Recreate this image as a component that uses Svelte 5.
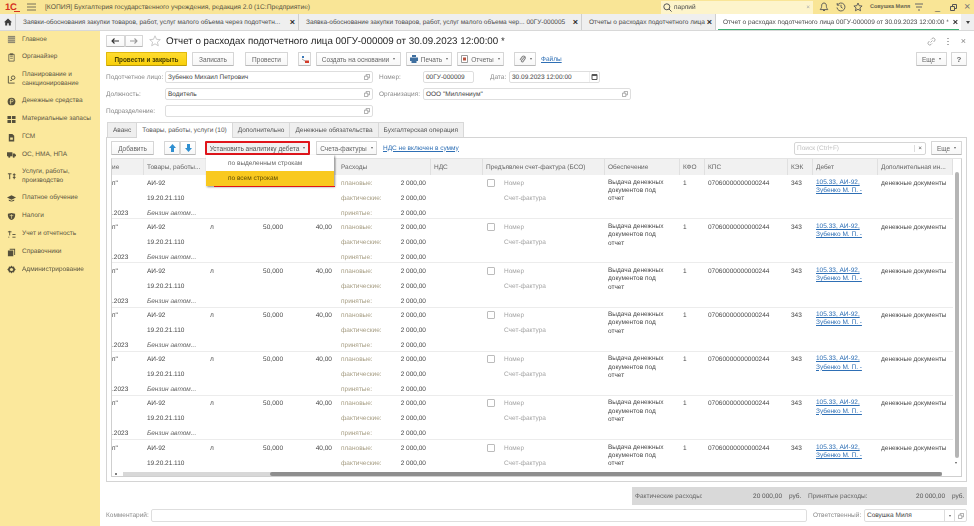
<script>
  const sideItems = [
    { label: ['Главное'], icon: 'home' },
    { label: ['Органайзер'], icon: 'org' },
    { label: ['Планирование и', 'санкционирование'], icon: 'plan' },
    { label: ['Денежные средства'], icon: 'money' },
    { label: ['Материальные запасы'], icon: 'stock' },
    { label: ['ГСМ'], icon: 'fuel' },
    { label: ['ОС, НМА, НПА'], icon: 'truck' },
    { label: ['Услуги, работы,', 'производство'], icon: 'tools' },
    { label: ['Платное обучение'], icon: 'edu' },
    { label: ['Налоги'], icon: 'tax' },
    { label: ['Учет и отчетность'], icon: 'acc' },
    { label: ['Справочники'], icon: 'books' },
    { label: ['Администрирование'], icon: 'gear' }
  ];

  const docTabs = [
    { text: 'Заявки-обоснования закупки товаров, работ, услуг малого объема через подотчетн...', w: 283 },
    { text: 'Заявка-обоснование закупки товаров, работ, услуг малого объема чер...  00ГУ-000005', w: 283 },
    { text: 'Отчеты о расходах подотчетного лица', w: 134 },
    { text: 'Отчет о расходах подотчетного лица 00ГУ-000009 от 30.09.2023 12:00:00 *', w: 246, active: true }
  ];

  const formTabs = ['Аванс', 'Товары, работы, услуги (10)', 'Дополнительно', 'Денежные обязательства', 'Бухгалтерская операция'];

  const headers = ['ие', 'Товары, работы...', '', '', '', 'Расходы', 'НДС', 'Предъявлен счет-фактура (БСО)', 'Обеспечение', 'КФО', 'КПС', 'КЭК', 'Дебет', 'Дополнительная ин...'];
  const rows = [0, 1, 2, 3, 4, 5, 6];
</script>

<div class="app">
  <header class="titlebar">
    <span class="logo">1С<i></i></span>
    <svg class="burger" width="9" height="8" viewBox="0 0 9 8"><path d="M0 1h9M0 4h9M0 7h9" stroke="#77705a" stroke-width="1"/></svg>
    <span class="apptitle">[КОПИЯ] Бухгалтерия государственного учреждения, редакция 2.0 (1С:Предприятие)</span>
    <div class="searchbox">
      <svg width="9" height="9" viewBox="0 0 9 9"><circle cx="3.8" cy="3.8" r="3" fill="none" stroke="#555"/><path d="M6 6l2.6 2.6" stroke="#555"/></svg>
      <span>парлий</span>
      <b>×</b>
    </div>
    <div class="sysicons">
      <svg width="10" height="10" viewBox="0 0 10 10"><path d="M5 1C3 1 2.6 2.6 2.6 4.4 2.6 6 1.5 7 1.2 7.6h7.6C8.500 7 7.400 6 7.400 4.400 7.400 2.600 7 1 5 1zM4 8.500h2" fill="none" stroke="#555" stroke-width=".9"/></svg>
      <svg width="10" height="10" viewBox="0 0 10 10"><path d="M1.500 3A4 4 0 1 1 1 5.500M1.200 1v2.200h2.200M5 2.800V5.200l1.600 1" fill="none" stroke="#555" stroke-width=".9"/></svg>
      <svg width="10" height="10" viewBox="0 0 10 10"><path d="M5 1l1.200 2.700 2.900.3-2.200 1.900.7 2.900L5 7.300 2.400 8.800l.7-2.900L.9 4l2.900-.3z" fill="none" stroke="#555" stroke-width=".9"/></svg>
      <span class="user">Совушка Миля</span>
      <svg width="9" height="9" viewBox="0 0 9 9"><path d="M0 1h8M1 4h6M3 7h2" stroke="#666" stroke-width="1"/></svg>
      <span class="winbtn">_</span>
      <svg class="restore" width="7" height="7" viewBox="0 0 7 7"><path d="M.5 2.500h4v4h-4zM2.500 2.500V.5h4v4h-2" fill="none" stroke="#555"/></svg>
      <span class="winbtn close">×</span>
    </div>
  </header>

  <nav class="doctabs">
    <div class="homecell">
      <svg width="8" height="8" viewBox="0 0 8 8"><path d="M4 .5L0 4.200h1.200V7.500h2V5.200h1.600v2.300h2V4.200H8z" fill="#3c3c3c"/></svg>
    </div>
    {#each docTabs as tab}
      <div class="doctab" class:active={tab.active} style="width: {tab.w}px">
        <span>{tab.text}</span><b>×</b>
      </div>
    {/each}
    <div class="moretabs"><i></i></div>
  </nav>

  <div class="main">
    <aside class="sidebar">
      {#each sideItems as item}
        <div class="sideitem">
          <svg width="9" height="9" viewBox="0 0 10 10" fill="#55503c">
            {#if item.icon === 'home'}
              <path d="M1 1h8v8H1z" fill="#8d8770"/><path d="M1 3h8M1 5h8M1 7h8" stroke="#e8dba0" stroke-width=".6"/>
            {:else if item.icon === 'org'}
              <path d="M2 1.500h6v7.500H2z" fill="none" stroke="#6b6650"/><path d="M3.500 .8h3v1.500h-3zM3.500 4h3M3.500 6h3" stroke="#6b6650" stroke-width=".8"/>
            {:else if item.icon === 'plan'}
              <circle cx="6.800" cy="3" r="2" fill="none" stroke="#55503c"/><path d="M1.500 1v8h7M3.500 6h2" fill="none" stroke="#55503c"/>
            {:else if item.icon === 'money'}
              <circle cx="5" cy="5" r="4.300"/><path d="M4 8V2.500h1.500a1.300 1.300 0 0 1 0 2.800H3" fill="none" stroke="#f5e49b" stroke-width=".8"/>
            {:else if item.icon === 'stock'}
              <path d="M.5 1h4v3.500h-4zM5.500 1h4v3.500h-4zM.5 5.500h4V9h-4zM5.500 5.500h4V9h-4z"/>
            {:else if item.icon === 'fuel'}
              <path d="M2 1h4l2 2v6.500H2z"/><path d="M3.500 5h3v2.500h-3z" fill="#f5e49b"/>
            {:else if item.icon === 'truck'}
              <path d="M0 2.500h6v4.500H0zM6.500 4h2l1.500 1.500V7H6.500z"/><circle cx="2.500" cy="7.500" r="1.200"/><circle cx="7.500" cy="7.500" r="1.200"/>
            {:else if item.icon === 'tools'}
              <path d="M1 2h4M3 2v6M6.500 3h3M8 1.500V8M6.500 6h3" fill="none" stroke="#55503c" stroke-width="1.100"/>
            {:else if item.icon === 'edu'}
              <path d="M5 1.500L0 4l5 2.500L10 4z"/><path d="M2 6v1.500c1.500 1.200 4.500 1.200 6 0V6L5 7.500z"/>
            {:else if item.icon === 'tax'}
              <path d="M5 1L1 2v2c0 2.500 2 4.500 4 5 2-.5 4-2.500 4-5V2z"/><path d="M5 2.500v5M3 4h4" stroke="#f5e49b" stroke-width=".7"/>
            {:else if item.icon === 'acc'}
              <path d="M1 2h4M3 1v5M6 5h3.500M6 8h3.500M1.500 8h1" stroke="#55503c" fill="none"/>
            {:else if item.icon === 'books'}
              <path d="M3 .8h6v7H8V2H3zM1 2.800h6v6.500H1z"/>
            {:else}
              <path d="M5 .5l1 1.500 1.800-.4.400 1.800L9.700 5l-1.500 1.600-.4 1.800L6 8l-1 1.500L4 8l-1.800.4-.4-1.800L.3 5l1.500-1.600.4-1.800L4 2z"/><circle cx="5" cy="5" r="1.800" fill="#f5e49b"/>
            {/if}
          </svg>
          <span>{#each item.label as line}<span class="line">{line}</span>{/each}</span>
        </div>
      {/each}
    </aside>

    <section class="form">
      <div class="formhead">
        <div class="navgroup">
          <button class="btn nav"><svg width="8" height="6" viewBox="0 0 8 6"><path d="M8 3H1M3.500.5L1 3l2.500 2.500" fill="none" stroke="#333" stroke-width="1.100"/></svg></button>
          <button class="btn nav"><svg width="8" height="6" viewBox="0 0 8 6"><path d="M0 3h7M4.500.5L7 3 4.500 5.500" fill="none" stroke="#999" stroke-width="1.100"/></svg></button>
        </div>
        <svg class="star" width="12" height="12" viewBox="0 0 12 12"><path d="M6 .8l1.500 3.500 3.800.3-2.900 2.500.9 3.700L6 8.800l-3.300 2 .9-3.700L.7 4.600l3.800-.3z" fill="none" stroke="#c9c9c9"/></svg>
        <h1>Отчет о расходах подотчетного лица 00ГУ-000009 от 30.09.2023 12:00:00 *</h1>
        <div class="headicons">
          <svg width="9" height="9" viewBox="0 0 9 9"><path d="M3.500 5.500L5.500 3.500M4 2.500l1-1a1.700 1.700 0 0 1 2.500 2.500l-1 1M5 6.500l-1 1A1.700 1.700 0 0 1 1.500 5l1-1" fill="none" stroke="#999" stroke-width=".8"/></svg>
          <svg width="3" height="9" viewBox="0 0 3 9"><path d="M1 1v1M1 4v1M1 7v1" stroke="#777" stroke-width="1.200"/></svg>
          <span class="x">×</span>
        </div>
      </div>

      <div class="cmdbar">
        <button class="btn primary">Провести и закрыть</button>
        <button class="btn w42">Записать</button>
        <button class="btn w43 gap6">Провести</button>
        <button class="btn icon gap5">
          <svg width="8" height="9" viewBox="0 0 8 9"><path d="M1 1h2v2H1z" fill="#3a78b8"/><path d="M1 4l3 2" stroke="#888" stroke-width=".8"/><path d="M4 5.500h4V8H4z" fill="#d23b2a"/></svg>
        </button>
        <button class="btn w85">Создать на основании<i class="caret"></i></button>
        <button class="btn w46">
          <svg width="8" height="8" viewBox="0 0 8 8"><path d="M2 0h4v2H2zM0 2.500h8V6H6.500v2h-5V6H0z" fill="#3f6f9f"/></svg>
          Печать<i class="caret"></i>
        </button>
        <button class="btn w47">
          <svg width="7" height="8" viewBox="0 0 7 8"><path d="M.5.500h6v7h-6z" fill="#fff" stroke="#999"/><path d="M2 2.500h3v3H2z" fill="#b9523f"/></svg>
          Отчеты<i class="caret"></i>
        </button>
        <button class="btn w22 gap5">
          <svg width="7" height="8" viewBox="0 0 7 8"><path d="M5.500 2L2.500 5.500a1 1 0 0 0 1.400 1.300L6.200 3.500A1.800 1.800 0 0 0 3.500 1.400L1 4.800" fill="none" stroke="#888" stroke-width="1.100"/></svg>
          <i class="caret"></i>
        </button>
        <a class="link" href="#files">Файлы</a>
        <button class="btn w31 pushright">Еще<i class="caret"></i></button>
        <button class="btn help">?</button>
      </div>

      <div class="fieldrow">
        <span class="flabel">Подотчетное лицо:</span>
        <div class="input w208"><span>Зубенко Михаил Петрович</span><svg class="openicon" width="6" height="6" viewBox="0 0 7 7"><path d="M.5 2.500h4v4h-4zM2.500 2.500V.5h4v4h-2" fill="none" stroke="#888" stroke-width=".8"/></svg></div>
        <span class="flabel second">Номер:</span>
        <div class="input w51"><span>00ГУ-000009</span></div>
        <span class="flabel date">Дата:</span>
        <div class="input w91"><span>30.09.2023 12:00:00</span><svg class="calicon" width="10" height="12" viewBox="0 0 10 12"><path d="M0 0v12" stroke="#ddd"/><path d="M3 3.500h5v5H3z" fill="none" stroke="#555"/><path d="M3 4.500h5" stroke="#555"/></svg></div>
      </div>
      <div class="fieldrow">
        <span class="flabel">Должность:</span>
        <div class="input w208"><span>Водитель</span><svg class="openicon" width="6" height="6" viewBox="0 0 7 7"><path d="M.5 2.500h4v4h-4zM2.500 2.500V.5h4v4h-2" fill="none" stroke="#888" stroke-width=".8"/></svg></div>
        <span class="flabel second">Организация:</span>
        <div class="input w208"><span>ООО "Миллениум"</span><svg class="openicon" width="6" height="6" viewBox="0 0 7 7"><path d="M.5 2.500h4v4h-4zM2.500 2.500V.5h4v4h-2" fill="none" stroke="#888" stroke-width=".8"/></svg></div>
      </div>
      <div class="fieldrow">
        <span class="flabel">Подразделение:</span>
        <div class="input w208"><span></span><svg class="openicon" width="6" height="6" viewBox="0 0 7 7"><path d="M.5 2.500h4v4h-4zM2.500 2.500V.5h4v4h-2" fill="none" stroke="#888" stroke-width=".8"/></svg></div>
      </div>

      <div class="formtabs">
        {#each formTabs as tab, i}
          <div class="formtab" class:current={i === 1}>{tab}</div>
        {/each}
      </div>

      <div class="panel">
        <div class="paneltools">
          <button class="btn w43">Добавить</button>
          <div class="arrows">
            <button class="btn arrow"><svg width="7" height="8" viewBox="0 0 7 8"><path d="M3.500 0L7 4H5v4H2V4H0z" fill="#2f8fd0"/></svg></button>
            <button class="btn arrow"><svg width="7" height="8" viewBox="0 0 7 8"><path d="M3.500 8L7 4H5V0H2v4H0z" fill="#2f8fd0"/></svg></button>
          </div>
          <button class="btn analytic">Установить аналитику дебета<i class="caret"></i></button>
          <button class="btn w61">Счета-фактуры<i class="caret"></i></button>
          <a class="link vat" href="#vat">НДС не включен в сумму</a>
          <div class="tablesearch"><span>Поиск (Ctrl+F)</span><b>×</b></div>
          <button class="btn w31">Еще<i class="caret"></i></button>

          <div class="menu">
            <div class="menuitem">по выделенным строкам</div>
            <div class="menuitem hot">по всем строкам<i class="underline"></i></div>
          </div>
        </div>

        <div class="table">
          <div class="tablemain">
            <div class="grid head">
              {#each headers as h}
                <div class="hcell">{h}</div>
              {/each}
            </div>
            <div class="tbody">
              {#each rows as r}
                <div class="grid row">
                  <div class="cell clipped">
                    <span>п"</span>
                    {#if r < 6}<span>&nbsp;</span><span>.2023</span>{/if}
                  </div>
                  <div class="cell">
                    <span>АИ-92</span><span>19.20.21.110</span>
                    {#if r < 6}<span class="em">Бензин автом...</span>{/if}
                  </div>
                  <!-- first row's unit, quantity and price sit under the open menu -->
                  <div class="cell">{#if r > 0}<span>л</span>{/if}</div>
                  <div class="cell num">{#if r > 0}<span>50,000</span>{/if}</div>
                  <div class="cell num">{#if r > 0}<span>40,00</span>{/if}</div>
                  <div class="cell costs">
                    <span class="muted">плановые:</span><span>2 000,00</span>
                    <span class="muted">фактические:</span><span>2 000,00</span>
                    {#if r < 6}<span class="muted">принятые:</span><span>2 000,00</span>{/if}
                  </div>
                  <div class="cell"></div>
                  <div class="cell invoice">
                    <i class="check"></i>
                    <div class="invoicetext"><span>Номер</span><span>Счет-фактура</span></div>
                  </div>
                  <div class="cell wrap narrow">Выдача денежных документов под отчет</div>
                  <div class="cell"><span>1</span></div>
                  <div class="cell"><span>07060000000000244</span></div>
                  <div class="cell"><span>343</span></div>
                  <div class="cell wrap"><a class="link" href="#debit">105.33, АИ-92,</a><a class="link" href="#debit">Зубенко М. П. -</a></div>
                  <div class="cell"><span>денежные документы</span></div>
                </div>
              {/each}
            </div>
            <div class="hscroll"><i class="tri"></i><div class="hbar"><div class="hthumb"></div></div></div>
          </div>
          <div class="vscroll"><div class="vthumb"></div></div>
        </div>
      </div>

      <div class="summary">
        <span class="slabel">Фактические расходы:</span>
        <span class="sval a">20 000,00</span><span class="cur">руб.</span>
        <span class="slabel two">Принятые расходы:</span>
        <span class="sval b">20 000,00</span><span class="cur">руб.</span>
      </div>

      <div class="fieldrow last">
        <span class="flabel comment">Комментарий:</span>
        <div class="input w656"><span></span></div>
        <span class="flabel resp">Ответственный:</span>
        <div class="input w103"><span>Совушка Миля</span><b class="dd"><i class="caret"></i></b><svg class="openicon" width="6" height="6" viewBox="0 0 7 7"><path d="M.5 2.500h4v4h-4zM2.500 2.500V.5h4v4h-2" fill="none" stroke="#888" stroke-width=".8"/></svg></div>
      </div>
    </section>
  </div>
</div>

<style>
  :global(body) {
    margin: 0;
    background: #fff;
  }

  .app {
    width: 974px;
    height: 526px;
    overflow: hidden;
    display: flex;
    flex-direction: column;
    font-family: "Liberation Sans", Arial, sans-serif;
    font-size: 6.5px;
    text-rendering: geometricPrecision;
    color: #4a4a4a;
    filter: blur(.3px);
  }

  button {
    font: inherit;
    color: inherit;
    padding: 0;
  }

  /* top bar */
  .titlebar {
    height: 14px;
    background: #f9e596;
    display: flex;
    align-items: center;
    flex: none;
  }

  .logo {
    position: relative;
    margin-left: 5px;
    width: 17px;
    font-size: 9.5px;
    font-weight: bold;
    color: #d5321f;
    letter-spacing: -.3px;
  }

  .logo i {
    position: absolute;
    left: 9px;
    bottom: 1px;
    width: 6px;
    height: 1px;
    background: #d5321f;
  }

  .burger {
    margin-left: 5px;
  }

  .apptitle {
    margin-left: 9px;
    width: 297px;
    white-space: nowrap;
    font-size: 6.7px;
    color: #55513f;
  }

  .searchbox {
    margin-left: 319px;
    width: 152px;
    height: 13px;
    background: #fdf4cb;
    display: flex;
    align-items: center;
    gap: 2px;
    padding-left: 2px;
    box-sizing: border-box;
    position: relative;
  }

  .searchbox b {
    position: absolute;
    right: 3px;
    font-weight: normal;
    color: #aaa;
  }

  .sysicons {
    display: flex;
    align-items: center;
    margin-left: 6px;
    gap: 7px;
    color: #555;
  }

  .user {
    font-size: 5.5px;
    width: 38px;
    white-space: nowrap;
    font-weight: bold;
    color: #6a6550;
  }

  .winbtn {
    font-size: 9px;
    width: 8px;
    margin-left: 4px;
    line-height: 10px;
  }

  .winbtn.close {
    margin-left: 0;
    font-size: 11px;
    color: #777;
  }

  /* document tabs */
  .doctabs {
    height: 17px;
    background: #efefef;
    border-bottom: 1px solid #d8d8d8;
    display: flex;
    flex: none;
    box-sizing: border-box;
  }

  .homecell {
    width: 15px;
    flex: none;
    display: flex;
    align-items: center;
    justify-content: center;
  }

  .doctab {
    flex: none;
    box-sizing: border-box;
    border-left: 1px solid #cfcfcf;
    padding: 0 3px 0 7px;
    display: flex;
    align-items: center;
    justify-content: space-between;
    white-space: nowrap;
    overflow: hidden;
  }

  .doctab b {
    font-size: 9px;
    font-weight: bold;
    color: #333;
  }

  .doctab.active {
    background: #fff;
    position: relative;
  }

  .doctab.active::after {
    content: "";
    position: absolute;
    left: 2px;
    right: 2px;
    bottom: 0;
    height: 1.5px;
    background: #3bb273;
  }

  .moretabs {
    flex: 1;
    display: flex;
    align-items: center;
    justify-content: center;
  }

  .moretabs i {
    border-top: 3px solid #444;
    border-left: 2.5px solid transparent;
    border-right: 2.5px solid transparent;
  }

  /* sidebar */
  .main {
    flex: 1;
    display: flex;
    min-height: 0;
  }

  .sidebar {
    width: 100px;
    flex: none;
    background: #fbe89c;
    box-sizing: border-box;
  }

  .sideitem {
    display: flex;
    align-items: center;
    gap: 6px;
    padding-left: 7px;
    height: 17.8px;
    color: #5b5643;
  }

  .sideitem:nth-child(3), .sideitem:nth-child(8) {
    height: 26px;
  }

  .line {
    display: block;
    line-height: 8.5px;
    white-space: nowrap;
  }

  /* form */
  .form {
    flex: 1;
    min-width: 0;
    display: flex;
    flex-direction: column;
    padding: 4px 7px 0 6px;
    box-sizing: border-box;
  }

  .formhead {
    display: flex;
    align-items: center;
    height: 12px;
  }

  .navgroup {
    display: flex;
    width: 37px;
  }

  .btn {
    height: 14px;
    box-sizing: border-box;
    background: linear-gradient(#fff, #f7f7f7);
    border: 1px solid #d6d6d6;
    border-bottom-color: #b9b9b9;
    border-radius: 1px;
    display: inline-flex;
    align-items: center;
    justify-content: center;
    gap: 3px;
    white-space: nowrap;
    flex: none;
    color: #666;
  }

  .btn.nav {
    width: 18.5px;
    height: 12px;
  }

  .star {
    margin-left: 6px;
  }

  h1 {
    margin: 0 0 0 5px;
    font-size: 9.75px;
    font-weight: normal;
    color: #262626;
    white-space: nowrap;
  }

  .headicons {
    margin-left: auto;
    display: flex;
    align-items: center;
    gap: 11px;
    padding-right: 1px;
  }

  .headicons .x {
    color: #888;
    font-size: 9px;
  }

  .cmdbar {
    display: flex;
    align-items: center;
    margin-top: 5px;
    height: 14px;
    gap: 5px;
  }

  .btn.primary {
    width: 81px;
    background: linear-gradient(#ffdc2f, #f8cf0b);
    border-color: #e0b90c;
    border-bottom-color: #bb9a08;
    color: #4a4100;
    font-weight: bold;
    font-size: 6.4px;
  }

  .w22 { width: 22px; }
  .w31 { width: 31px; }
  .w42 { width: 42px; }
  .w43 { width: 43px; }
  .w46 { width: 46px; }
  .w47 { width: 47px; }
  .w61 { width: 61px; }
  .w85 { width: 85px; }
  .gap5 { margin-left: 5px; }
  .gap6 { margin-left: 6px; }

  .btn.icon {
    width: 13px;
  }

  .caret {
    display: inline-block;
    border-top: 2px solid #666;
    border-left: 1.5px solid transparent;
    border-right: 1.5px solid transparent;
    margin-left: 1px;
  }

  .link {
    color: #2e6fb5;
    text-decoration: underline;
    display: block;
    white-space: nowrap;
  }

  .pushright {
    margin-left: auto;
  }

  .btn.help {
    width: 16px;
    font-weight: bold;
    font-size: 8px;
    margin-left: -1px;
  }

  .fieldrow {
    display: flex;
    align-items: center;
    height: 12px;
    margin-top: 5px;
    flex: none;
  }

  .flabel {
    width: 59px;
    flex: none;
    white-space: nowrap;
    color: #8a8a8a;
  }

  .flabel.second {
    margin-left: 6px;
    width: 44px;
  }

  .flabel.date {
    margin-left: 16px;
    width: 19px;
  }

  .flabel.comment {
    width: 45px;
  }

  .flabel.resp {
    margin-left: 6px;
    width: 51px;
  }

  .input {
    box-sizing: border-box;
    height: 12.5px;
    border: 1px solid #dedede;
    border-radius: 2px;
    background: #fff;
    display: flex;
    align-items: center;
    padding-left: 2px;
    flex: none;
    position: relative;
    color: #444;
    white-space: nowrap;
  }

  .w208 { width: 208px; }
  .w51 { width: 51px; }
  .w91 { width: 91px; }
  .w656 { width: 656px; }
  .w103 { width: 103px; }

  .openicon {
    position: absolute;
    right: 2.5px;
    top: 2.5px;
  }

  .calicon {
    position: absolute;
    right: 0;
    top: -1px;
  }

  .dd {
    position: absolute;
    right: 11px;
    top: 0;
    bottom: 0;
    width: 9px;
    border-left: 1px solid #ddd;
    border-right: 1px solid #ddd;
    display: flex;
    align-items: center;
    justify-content: center;
  }

  .dd .caret {
    margin: 0;
  }

  .formtabs {
    display: flex;
    margin-top: 5px;
    height: 15px;
    padding-left: 1px;
    flex: none;
  }

  .formtab {
    background: #efefef;
    border: 1px solid #d8d8d8;
    border-bottom: none;
    border-left: none;
    padding: 0 5px;
    display: flex;
    align-items: center;
    color: #555;
    white-space: nowrap;
  }

  .formtab:first-child {
    border-left: 1px solid #d8d8d8;
  }

  .formtab.current {
    background: #fff;
    position: relative;
    height: 16px;
    z-index: 1;
    box-sizing: border-box;
  }

  /* panel */
  .panel {
    box-sizing: border-box;
    height: 345px;
    flex: none;
    border: 1px solid #d4d4d4;
    padding: 3px 4px 4px;
    display: flex;
    flex-direction: column;
  }

  .paneltools {
    position: relative;
    display: flex;
    align-items: center;
    height: 14px;
    flex: none;
  }

  .arrows {
    display: flex;
    margin-left: 10px;
  }

  .btn.arrow {
    width: 16px;
  }

  .btn.analytic {
    width: 105px;
    margin-left: 9px;
    border: 2px solid #e0151b;
    background: #f2f2f2;
    color: #555;
  }

  .w61 {
    margin-left: 6px;
  }

  .vat {
    margin-left: 6px;
  }

  .tablesearch {
    margin-left: auto;
    box-sizing: border-box;
    width: 132px;
    height: 13px;
    border: 1px solid #d5d5d5;
    border-radius: 2px;
    display: flex;
    align-items: center;
    justify-content: space-between;
    padding: 0 3px 0 2px;
    color: #c2c2c2;
    margin-right: 5px;
  }

  .tablesearch b {
    color: #555;
    font-weight: normal;
    border-left: 1px solid #ddd;
    padding-left: 3px;
  }

  .menu {
    position: absolute;
    left: 95px;
    top: 14px;
    width: 128px;
    height: 31px;
    background: #fff;
    box-shadow: 1px 1px 2px rgba(0, 0, 0, .45);
    z-index: 5;
    padding-top: 1px;
    box-sizing: border-box;
  }

  .menuitem {
    height: 15px;
    display: flex;
    align-items: center;
    padding-left: 22px;
    color: #666;
    position: relative;
  }

  .menuitem.hot {
    background: #f9c91f;
    color: #5c4a00;
  }

  .underline {
    position: absolute;
    left: 8px;
    right: -1px;
    bottom: -1px;
    height: 1.5px;
    background: #e0151b;
  }

  .table {
    margin-top: 3px;
    flex: 1;
    min-height: 0;
    display: flex;
    border: 1px solid #cfcfcf;
    border-top-color: #e4e4e4;
  }

  .tablemain {
    width: 841px;
    flex: none;
    display: flex;
    flex-direction: column;
    min-height: 0;
  }

  .grid {
    display: grid;
    grid-template-columns: 32px 63px 38px 42px 49px 95px 52px 122px 75px 25px 83px 25px 65px 75px;
  }

  .grid.head {
    height: 16px;
    background: #f1f1f1;
    flex: none;
  }

  .hcell {
    padding-left: 3px;
    border-right: 1px solid #e0e0e0;
    display: flex;
    align-items: center;
    white-space: nowrap;
    overflow: hidden;
    color: #666;
  }

  .hcell:first-child {
    padding-left: 0;
  }

  .hcell:nth-child(6) {
    padding-left: 5px;
  }

  .tbody {
    flex: 1;
    min-height: 0;
    overflow: hidden;
  }

  .grid.row {
    height: 44.2px;
    box-sizing: border-box;
    border-bottom: 1px solid #ececec;
  }

  .cell {
    display: flex;
    flex-direction: column;
    padding-top: .5px;
    padding-left: 3px;
    line-height: 15px;
    white-space: nowrap;
    overflow: hidden;
    min-width: 0;
  }

  .cell.clipped {
    padding-left: 0;
  }

  .cell.num {
    padding-right: 4px;
    padding-left: 0;
    align-items: flex-end;
  }

  .em {
    font-style: italic;
    color: #666;
  }

  .costs {
    display: grid;
    grid-template-columns: 1fr auto;
    align-content: start;
    padding-left: 5px;
    padding-right: 5px;
  }

  .muted {
    color: #a79e84;
  }

  .invoice {
    flex-direction: row;
    gap: 9px;
    padding-left: 4px;
  }

  .check {
    width: 8px;
    height: 8px;
    margin-top: 3px;
    border: 1px solid #bcbcbc;
    border-radius: 1px;
    box-sizing: border-box;
    flex: none;
  }

  .invoicetext {
    display: flex;
    flex-direction: column;
    color: #a3a3a3;
  }

  .cell.wrap {
    white-space: normal;
    line-height: 8.4px;
    padding-top: 3.5px;
    display: block;
  }

  .cell.narrow {
    padding-right: 12px;
  }

  .hscroll {
    height: 5px;
    flex: none;
    display: flex;
    align-items: center;
    gap: 6px;
    padding: 0 11px 0 3px;
    background: #fff;
  }

  .tri {
    width: 2px;
    height: 2px;
    background: #555;
    border-radius: 50%;
  }

  .hbar {
    flex: 1;
    height: 4px;
    background: #d8d8d8;
    display: flex;
    justify-content: flex-end;
  }

  .hthumb {
    width: 672px;
    background: #8e8e8e;
    border-radius: 2px;
  }

  .vscroll {
    flex: 1;
    padding: 13px 2px 18px;
    display: flex;
    position: relative;
  }

  .vscroll::after {
    content: "";
    position: absolute;
    left: 2px;
    bottom: 12px;
    border-top: 2px solid #555;
    border-left: 1.5px solid transparent;
    border-right: 1.5px solid transparent;
  }

  .vthumb {
    flex: 1;
    background: #b5b5b5;
    border-radius: 2px;
  }

  /* footer */
  .summary {
    margin: 5px 0 0 526px;
    height: 18px;
    background: #d9d9d9;
    display: flex;
    align-items: center;
    color: #555;
    flex: none;
    white-space: nowrap;
  }

  .slabel {
    margin-left: 3px;
    width: 110px;
    color: #666;
  }

  .slabel.two {
    width: 100px;
    margin-left: 8px;
  }

  .sval {
    width: 37px;
    text-align: right;
  }

  .cur {
    margin-left: 7px;
    width: 11px;
  }

  .fieldrow.last {
    margin-top: 4px;
    height: 13px;
  }
</style>
